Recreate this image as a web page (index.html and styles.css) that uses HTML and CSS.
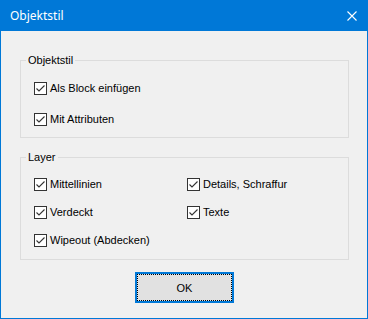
FILE: index.html
```html
<!DOCTYPE html>
<html lang="de">
  <head>
    <meta charset="UTF-8" />
    <meta name="viewport" content="width=device-width, initial-scale=1.0" />
    <title>Objektstil</title>
    <link rel="stylesheet" href="styles.css">
  </head>
  <body>
    <div class="window">
      <!-- Title bar -->
      <div class="titlebar">
        <span class="title">Objektstil</span>
        <svg class="close" width="10" height="10" viewBox="0 0 10 10">
          <path d="M0.5 0.5 L9.5 9.5 M9.5 0.5 L0.5 9.5" stroke="#fff" stroke-width="1.1" fill="none"/>
        </svg>
      </div>

      <!-- Dialog body -->
      <div class="content">
        <fieldset class="group group-style">
          <legend>Objektstil</legend>
          <div class="rows">
            <label class="check"><span class="box"><svg width="11" height="11" viewBox="0 0 11 11"><path d="M1.5 5.5 L4 8 L9.5 2.5" stroke="#333" stroke-width="1.1" fill="none"/></svg></span>Als Block einfügen</label>
            <label class="check"><span class="box"><svg width="11" height="11" viewBox="0 0 11 11"><path d="M1.5 5.5 L4 8 L9.5 2.5" stroke="#333" stroke-width="1.1" fill="none"/></svg></span>Mit Attributen</label>
          </div>
        </fieldset>

        <fieldset class="group group-layer">
          <legend>Layer</legend>
          <div class="grid">
            <label class="check"><span class="box"><svg width="11" height="11" viewBox="0 0 11 11"><path d="M1.5 5.5 L4 8 L9.5 2.5" stroke="#333" stroke-width="1.1" fill="none"/></svg></span>Mittellinien</label>
            <label class="check"><span class="box"><svg width="11" height="11" viewBox="0 0 11 11"><path d="M1.5 5.5 L4 8 L9.5 2.5" stroke="#333" stroke-width="1.1" fill="none"/></svg></span>Details, Schraffur</label>
            <label class="check"><span class="box"><svg width="11" height="11" viewBox="0 0 11 11"><path d="M1.5 5.5 L4 8 L9.5 2.5" stroke="#333" stroke-width="1.1" fill="none"/></svg></span>Verdeckt</label>
            <label class="check"><span class="box"><svg width="11" height="11" viewBox="0 0 11 11"><path d="M1.5 5.5 L4 8 L9.5 2.5" stroke="#333" stroke-width="1.1" fill="none"/></svg></span>Texte</label>
            <label class="check"><span class="box"><svg width="11" height="11" viewBox="0 0 11 11"><path d="M1.5 5.5 L4 8 L9.5 2.5" stroke="#333" stroke-width="1.1" fill="none"/></svg></span>Wipeout (Abdecken)</label>
          </div>
        </fieldset>

        <div class="actions">
          <button type="button" class="btn-ok"><span class="focus">OK</span></button>
        </div>
      </div>
    </div>
  </body>
</html>
```

FILE: styles.css
```css
:root {
  --win-blue: #0078d7;
  --dialog-bg: #f0f0f0;
  --group-line: #dcdcdc;
  --button-bg: #e1e1e1;
  --text: #000000;
}

* {
  margin: 0;
  padding: 0;
  box-sizing: border-box;
}

body {
  background-color: var(--dialog-bg);
  font-family: 'Liberation Sans', Arial, sans-serif;
  font-size: 11px;
  color: var(--text);
}

.window {
  width: 368px;
  height: 319px;
  border: 1px solid var(--win-blue);
  border-top: none;
  display: flex;
  flex-direction: column;
  background-color: var(--dialog-bg);
}

/* Title bar */
.titlebar {
  height: 31px;
  margin: 0 -1px;
  padding: 0 10px 0 10px;
  background-color: var(--win-blue);
  display: flex;
  align-items: center;
  justify-content: space-between;
}

.title {
  font-family: 'Noto Sans', sans-serif;
  font-size: 12px;
  color: #ffffff;
  padding-bottom: 1px;
}

.close {
  margin-right: 1px;
}

/* Body */
.content {
  flex: 1;
  padding: 23px 18px 0 19px;
  display: flex;
  flex-direction: column;
}

.group {
  border: 1px solid var(--group-line);
  padding: 0 0 0 13px;
}

.group legend {
  margin-left: -8px;
  padding: 0 2px;
  line-height: 13px;
}

.group-style {
  padding-top: 15px;
  padding-bottom: 11px;
}

.group-layer {
  margin-top: 13px;
  padding-top: 14px;
  padding-bottom: 12px;
}

.rows {
  display: flex;
  flex-direction: column;
  gap: 18px;
}

.grid {
  display: grid;
  grid-template-columns: 153px 1fr;
  row-gap: 15px;
}

.check {
  display: flex;
  align-items: center;
  gap: 3px;
  height: 13px;
  line-height: 13px;
  white-space: nowrap;
}

.box {
  width: 13px;
  height: 13px;
  border: 1px solid #333333;
  background-color: #ffffff;
  display: flex;
  align-items: center;
  justify-content: center;
  flex-shrink: 0;
}

/* Button */
.actions {
  display: flex;
  justify-content: center;
  margin-top: 12px;
}

.btn-ok {
  width: 99px;
  height: 31px;
  border: 2px solid var(--win-blue);
  background-color: var(--button-bg);
  font-family: 'Liberation Sans', Arial, sans-serif;
  font-size: 11px;
  color: var(--text);
  display: flex;
}

.focus {
  flex: 1;
  border: 1px dotted #000000;
  display: flex;
  align-items: center;
  justify-content: center;
}
```
